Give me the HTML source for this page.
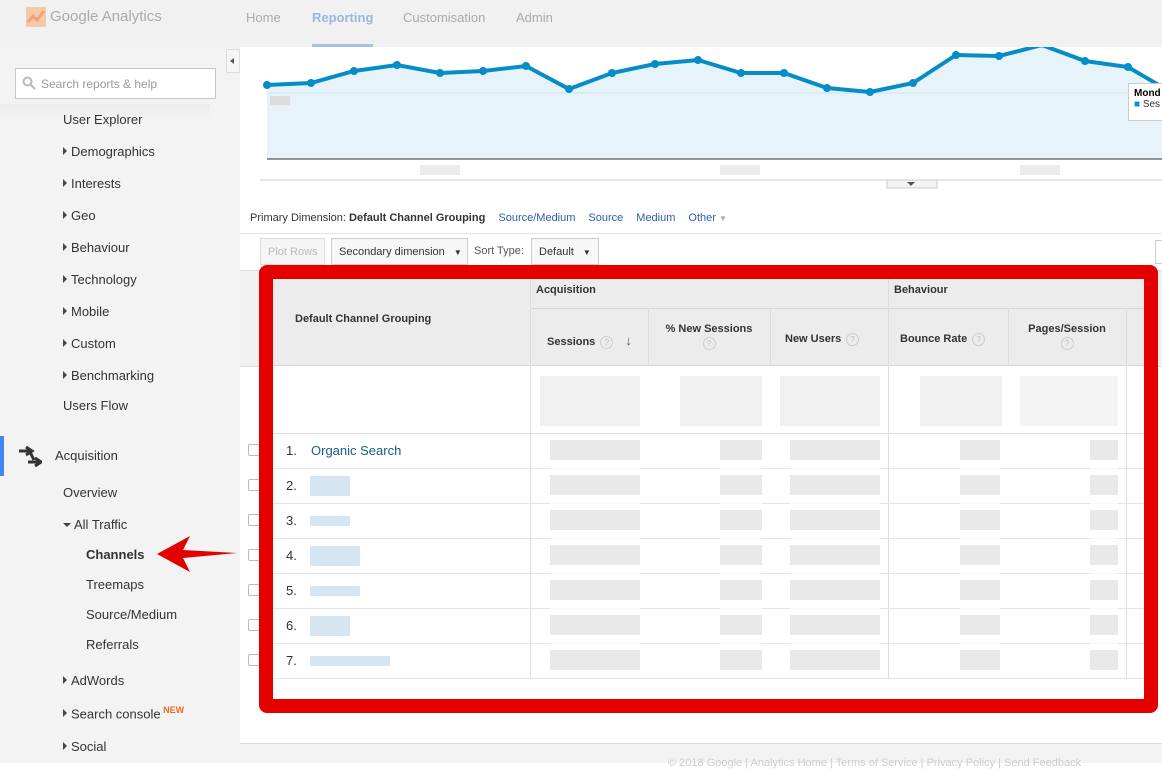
<!DOCTYPE html>
<html><head><meta charset="utf-8"><style>
*{margin:0;padding:0;box-sizing:border-box}
body{width:1162px;height:763px;overflow:hidden;background:#fff;font-family:"Liberation Sans",Arial,sans-serif;position:relative}
.a{position:absolute}
.hdr{left:0;top:0;width:1162px;height:47px;background:#f1f1f1}
.side{left:0;top:47px;width:240px;height:716px;background:#f3f3f3}
.nav{font-size:13px;color:#aaa;top:10px}
.si{font-size:13px;color:#333;white-space:nowrap}
.tri{display:inline-block;width:0;height:0;border-left:4px solid #444;border-top:4px solid transparent;border-bottom:4px solid transparent;margin-right:4px;vertical-align:1px}
.hd{font-size:11px;font-weight:bold;color:#333}
.q{display:inline-block;width:13px;height:13px;border-radius:50%;border:1px solid #ccc;font-size:8px;color:#bbb;text-align:center;line-height:11px;font-weight:normal;margin-left:5px}
.bl{background:#e2e2e2}
.cb{width:12px;height:12px;border:1px solid #bbb;border-radius:2px;background:#fff}
.num{font-size:13px;color:#333}
.lb{background:#d6e5f2}
</style></head><body>
<div class="a hdr"></div>
<svg class="a" style="left:26px;top:7px" width="20" height="20"><rect width="20" height="20" fill="#f8c9a8"/><polyline points="2,15 7,9 11,13 18,4" stroke="#f1a17a" stroke-width="3" fill="none"/></svg>
<div class="a" style="left:50px;top:8px;font-size:15px;color:#aaa">Google Analytics</div>
<div class="a nav" style="left:246px">Home</div>
<div class="a nav" style="left:312px;color:#9bb5e4;font-weight:bold">Reporting</div>
<div class="a" style="left:312px;top:44px;width:61px;height:3px;background:#a8c0ec"></div>
<div class="a nav" style="left:403px">Customisation</div>
<div class="a nav" style="left:516px">Admin</div>
<div class="a side"></div>
<div class="a" style="left:0;top:104px;width:210px;height:14px;background:linear-gradient(#eaeaea,#f3f3f3)"></div>
<div class="a" style="left:15px;top:68px;width:201px;height:31px;border:1px solid #c8c8c8;background:#fff;font-size:12px;color:#999;padding:8px 0 0 25px">Search reports &amp; help</div>
<svg class="a" style="left:22px;top:76px" width="14" height="14"><circle cx="5.5" cy="5.5" r="4" stroke="#bbb" stroke-width="2" fill="none"/><line x1="8.5" y1="8.5" x2="13" y2="13" stroke="#bbb" stroke-width="2"/></svg>
<div class="a" style="left:226px;top:49px;width:14px;height:24px;background:#f6f6f6;border:1px solid #ddd"></div>
<div class="a" style="left:230px;top:58px;border-right:4px solid #555;border-top:3px solid transparent;border-bottom:3px solid transparent"></div>
<div class="a si" style="left:63px;top:112px">User Explorer</div>
<div class="a si" style="left:63px;top:144px"><span class="tri"></span>Demographics</div>
<div class="a si" style="left:63px;top:176px"><span class="tri"></span>Interests</div>
<div class="a si" style="left:63px;top:208px"><span class="tri"></span>Geo</div>
<div class="a si" style="left:63px;top:240px"><span class="tri"></span>Behaviour</div>
<div class="a si" style="left:63px;top:272px"><span class="tri"></span>Technology</div>
<div class="a si" style="left:63px;top:304px"><span class="tri"></span>Mobile</div>
<div class="a si" style="left:63px;top:336px"><span class="tri"></span>Custom</div>
<div class="a si" style="left:63px;top:368px"><span class="tri"></span>Benchmarking</div>
<div class="a si" style="left:63px;top:398px">Users Flow</div>
<div class="a" style="left:0;top:436px;width:4px;height:40px;background:#4285f4"></div>
<svg class="a" style="left:18px;top:446px" width="24" height="22"><path d="M1 5h12M8 1l6 4-6 4M10 16h12M17 12l6 4-6 4M12 6l4 8" stroke="#333" stroke-width="3" fill="none"/></svg>
<div class="a si" style="left:55px;top:448px">Acquisition</div>
<div class="a si" style="left:63px;top:485px">Overview</div>
<div class="a si" style="left:63px;top:517px"><span style="display:inline-block;border-top:4px solid #444;border-left:4px solid transparent;border-right:4px solid transparent;margin-right:3px;vertical-align:2px"></span>All Traffic</div>
<div class="a si" style="left:86px;top:547px;font-weight:bold">Channels</div>
<div class="a si" style="left:86px;top:577px">Treemaps</div>
<div class="a si" style="left:86px;top:607px">Source/Medium</div>
<div class="a si" style="left:86px;top:637px">Referrals</div>
<div class="a si" style="left:63px;top:673px"><span class="tri"></span>AdWords</div>
<div class="a si" style="left:63px;top:705px"><span class="tri"></span>Search console<sup style="color:#f06d1e;font-size:9px;font-weight:bold"> NEW</sup></div>
<div class="a si" style="left:63px;top:739px"><span class="tri"></span>Social</div>
<svg class="a" style="left:155px;top:533px" width="85" height="42"><path d="M2 21L35 3 28 17 82 20 28 25 35 39Z" fill="#e20000"/></svg>
<svg class="a" style="left:240px;top:47px" width="922" height="150">
<polygon points="27,38 27,112 922,112 922,50 888,20 845,14 802,-2 759,9 716,8 673,36 630,45 587,41 544,26 501,26 458,13 415,17 372,26 329,42 286,19 243,24 200,26 157,18 114,24 71,38" fill="#e6f3fa"/>
<line x1="27" y1="46" x2="922" y2="46" stroke="#cfe3ef"/>
<line x1="27" y1="112" x2="922" y2="112" stroke="#333"/>
<line x1="20" y1="133" x2="922" y2="133" stroke="#ccc"/>
<polyline points="27,38 71,36 114,24 157,18 200,26 243,24 286,19 329,42 372,26 415,17 458,13 501,26 544,26 587,41 630,45 673,36 716,8 759,9 802,-2 845,14 888,20 922,40" fill="none" stroke="#058dc7" stroke-width="4"/>
<g fill="#058dc7"><circle cx="27" cy="38" r="4"/><circle cx="71" cy="36" r="4"/><circle cx="114" cy="24" r="4"/><circle cx="157" cy="18" r="4"/><circle cx="200" cy="26" r="4"/><circle cx="243" cy="24" r="4"/><circle cx="286" cy="19" r="4"/><circle cx="329" cy="42" r="4"/><circle cx="372" cy="26" r="4"/><circle cx="415" cy="17" r="4"/><circle cx="458" cy="13" r="4"/><circle cx="501" cy="26" r="4"/><circle cx="544" cy="26" r="4"/><circle cx="587" cy="41" r="4"/><circle cx="630" cy="45" r="4"/><circle cx="673" cy="36" r="4"/><circle cx="716" cy="8" r="4"/><circle cx="759" cy="9" r="4"/><circle cx="845" cy="14" r="4"/><circle cx="888" cy="20" r="4"/></g>
<rect x="30" y="49" width="20" height="9" fill="#ddd"/>
<rect x="180" y="118" width="40" height="10" fill="#ececec"/><rect x="480" y="118" width="40" height="10" fill="#ececec"/><rect x="780" y="118" width="40" height="10" fill="#ececec"/>
<rect x="647" y="133" width="50" height="8" fill="#f3f3f3" stroke="#ccc"/>
<path d="M667 135h8l-4 4z" fill="#555"/>
</svg>
<div class="a" style="left:1128px;top:83px;width:40px;height:38px;background:#fff;border:1px solid #ccc;font-size:10px;font-weight:bold;padding:4px 0 0 5px">Mond<br><span style="font-weight:normal;color:#333"><span style="color:#058dc7">■</span> Ses</span></div>
<div class="a" style="left:250px;top:212px;font-size:11px;color:#333">Primary Dimension: <b>Default Channel Grouping</b> <span style="color:#2a5db0;margin-left:10px">Source/Medium</span><span style="color:#2a5db0;margin-left:13px">Source</span><span style="color:#2a5db0;margin-left:13px">Medium</span><span style="color:#2a5db0;margin-left:13px">Other</span> <span style="color:#aaa;font-size:8px">▼</span></div>
<div class="a" style="left:240px;top:233px;width:922px;height:1px;background:#e5e5e5"></div>
<div class="a" style="left:260px;top:238px;width:65px;height:27px;border:1px solid #ddd;background:#f5f5f5;font-size:11px;color:#bbb;padding:7px 0 0 7px">Plot Rows</div>
<div class="a" style="left:331px;top:238px;width:137px;height:27px;border:1px solid #ccc;background:#f7f7f7;font-size:11px;color:#333;padding:7px 0 0 7px">Secondary dimension <span style="font-size:8px;margin-left:6px">▼</span></div>
<div class="a" style="left:474px;top:245px;font-size:11px;color:#555">Sort Type:</div>
<div class="a" style="left:531px;top:238px;width:68px;height:27px;border:1px solid #ccc;background:#f7f7f7;font-size:11px;color:#333;padding:7px 0 0 7px">Default <span style="font-size:8px;margin-left:6px">▼</span></div>
<div class="a" style="left:1155px;top:240px;width:10px;height:24px;border:1px solid #ccc"></div>
<div class="a" style="left:240px;top:270px;width:922px;height:97px;background:#f1f1f1;border-top:1px solid #ddd;border-bottom:1px solid #ddd"></div>
<div class="a" style="left:240px;top:743px;width:922px;height:20px;background:#f3f3f3;border-top:1px solid #ddd"></div>
<div class="a" style="left:668px;top:757px;font-size:11px;color:#ccc;white-space:nowrap">© 2018 Google | Analytics Home | Terms of Service | Privacy Policy | Send Feedback</div>
<div class="a cb" style="left:248px;top:444px"></div><div class="a cb" style="left:248px;top:479px"></div><div class="a cb" style="left:248px;top:514px"></div><div class="a cb" style="left:248px;top:549px"></div><div class="a cb" style="left:248px;top:584px"></div><div class="a cb" style="left:248px;top:619px"></div><div class="a cb" style="left:248px;top:654px"></div>
<div class="a" style="left:259px;top:265px;width:899px;height:448px;border:14px solid #e50000;border-radius:8px;background:#fff"></div>
<div class="a" style="left:273px;top:279px;width:871px;height:87px;background:#ececec;border-bottom:1px solid #d5d5d5"></div>
<div class="a" style="left:530px;top:308px;width:614px;height:1px;background:#d5d5d5"></div>
<div class="a" style="left:530px;top:279px;width:1px;height:400px;background:#ddd"></div>
<div class="a" style="left:888px;top:279px;width:1px;height:400px;background:#ddd"></div>
<div class="a" style="left:648px;top:308px;width:1px;height:58px;background:#ddd"></div>
<div class="a" style="left:770px;top:308px;width:1px;height:58px;background:#ddd"></div>
<div class="a" style="left:1008px;top:308px;width:1px;height:58px;background:#ddd"></div>
<div class="a" style="left:1126px;top:308px;width:1px;height:370px;background:#ddd"></div>
<div class="a hd" style="left:295px;top:313px">Default Channel Grouping</div>
<div class="a hd" style="left:536px;top:284px">Acquisition</div>
<div class="a hd" style="left:894px;top:284px">Behaviour</div>
<div class="a hd" style="left:547px;top:333px">Sessions<span class="q">?</span><span style="margin-left:12px;font-size:13px;color:#555">↓</span></div>
<div class="a hd" style="left:648px;top:323px;width:122px;text-align:center">% New Sessions<br><span class="q" style="margin:2px 0 0">?</span></div>
<div class="a hd" style="left:785px;top:333px">New Users<span class="q">?</span></div>
<div class="a hd" style="left:900px;top:333px">Bounce Rate<span class="q">?</span></div>
<div class="a hd" style="left:1008px;top:323px;width:118px;text-align:center">Pages/Session<br><span class="q" style="margin:2px 0 0">?</span></div>
<div class="a bl" style="left:540px;top:376px;width:100px;height:50px;opacity:.5"></div>
<div class="a bl" style="left:680px;top:376px;width:82px;height:50px;opacity:.5"></div>
<div class="a bl" style="left:780px;top:376px;width:100px;height:50px;opacity:.5"></div>
<div class="a bl" style="left:920px;top:376px;width:82px;height:50px;opacity:.5"></div>
<div class="a bl" style="left:1020px;top:376px;width:98px;height:50px;opacity:.4"></div>
<div class="a" style="left:273px;top:433px;width:871px;height:1px;background:#ddd"></div>
<div class="a num" style="left:286px;top:443px">1.</div><div class="a" style="left:311px;top:443px;font-size:13px;color:#1a5b8c">Organic Search</div>
<div class="a num" style="left:286px;top:478px">2.</div><div class="a lb" style="left:310px;top:476px;width:40px;height:20px"></div>
<div class="a num" style="left:286px;top:513px">3.</div><div class="a lb" style="left:310px;top:516px;width:40px;height:10px"></div>
<div class="a num" style="left:286px;top:548px">4.</div><div class="a lb" style="left:310px;top:546px;width:50px;height:20px"></div>
<div class="a num" style="left:286px;top:583px">5.</div><div class="a lb" style="left:310px;top:586px;width:50px;height:10px"></div>
<div class="a num" style="left:286px;top:618px">6.</div><div class="a lb" style="left:310px;top:616px;width:40px;height:20px"></div>
<div class="a num" style="left:286px;top:653px">7.</div><div class="a lb" style="left:310px;top:656px;width:80px;height:10px"></div>
<div class="a" style="left:273px;top:468px;width:871px;height:1px;background:#e5e5e5"></div>
<div class="a" style="left:273px;top:503px;width:871px;height:1px;background:#e5e5e5"></div>
<div class="a" style="left:273px;top:538px;width:871px;height:1px;background:#e5e5e5"></div>
<div class="a" style="left:273px;top:573px;width:871px;height:1px;background:#e5e5e5"></div>
<div class="a" style="left:273px;top:608px;width:871px;height:1px;background:#e5e5e5"></div>
<div class="a" style="left:273px;top:643px;width:871px;height:1px;background:#e5e5e5"></div>
<div class="a" style="left:273px;top:678px;width:871px;height:1px;background:#e5e5e5"></div>
<div class="a" style="left:550px;top:440px;width:90px;height:230px;background:repeating-linear-gradient(#e0e0e0 0 20px,#fff 20px 35px);opacity:.7"></div>
<div class="a" style="left:720px;top:440px;width:42px;height:230px;background:repeating-linear-gradient(#e0e0e0 0 20px,#fff 20px 35px);opacity:.7"></div>
<div class="a" style="left:790px;top:440px;width:90px;height:230px;background:repeating-linear-gradient(#e0e0e0 0 20px,#fff 20px 35px);opacity:.7"></div>
<div class="a" style="left:960px;top:440px;width:40px;height:230px;background:repeating-linear-gradient(#e0e0e0 0 20px,#fff 20px 35px);opacity:.7"></div>
<div class="a" style="left:1090px;top:440px;width:28px;height:230px;background:repeating-linear-gradient(#e0e0e0 0 20px,#fff 20px 35px);opacity:.7"></div>
</body></html>
